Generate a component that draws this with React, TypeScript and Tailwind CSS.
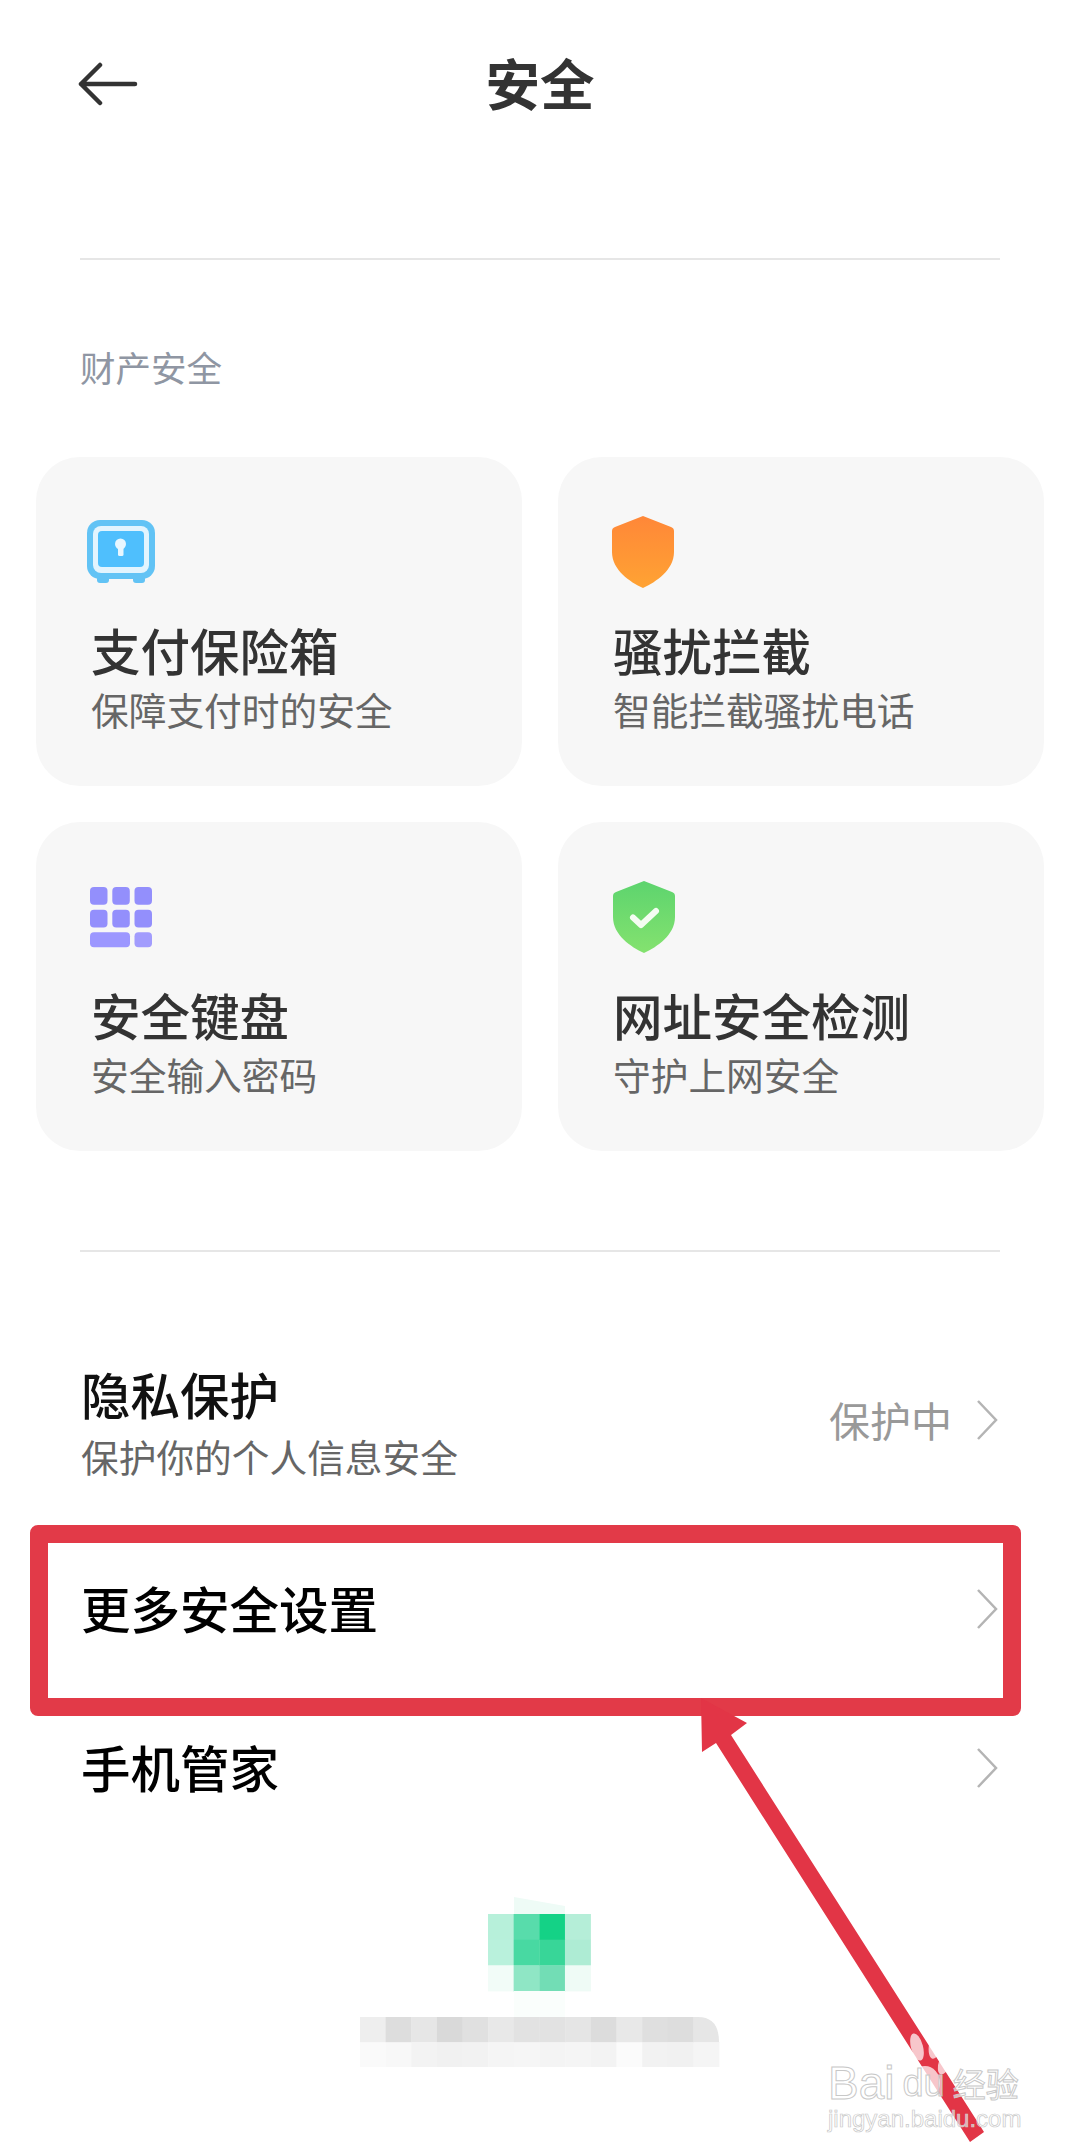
const sans = "font-['Noto_Sans_CJK_SC','Noto_Sans',sans-serif]";

function SafeIcon() {
  return (
    <svg width="68" height="63" viewBox="0 0 68 63">
      <rect x="10" y="56" width="12" height="7" rx="3" fill="#62c3f5" />
      <rect x="46" y="56" width="12" height="7" rx="3" fill="#62c3f5" />
      <rect x="0" y="0" width="68" height="59" rx="13" fill="#62c3f5" />
      <rect x="6" y="6" width="56" height="47" rx="8" fill="#e2f4fe" />
      <rect x="11" y="11" width="46" height="36" rx="4" fill="#4fbffd" />
      <circle cx="33.500" cy="24" r="5.500" fill="#e8f7ff" />
      <rect x="31" y="25" width="5.500" height="11" rx="1.500" fill="#e8f7ff" />
    </svg>
  );
}

const shield = "M31 0 L59 11 Q62 12 62 15 V36 C62 54 44 66 31 72 C18 66 0 54 0 36 V15 Q0 12 3 11 Z";

function OrangeShield() {
  return (
    <svg width="62" height="72" viewBox="0 0 62 72">
      <defs>
        <linearGradient id="o" x1="0" y1="0" x2="0" y2="1">
          <stop offset="0" stopColor="#ff8738" />
          <stop offset="1" stopColor="#ffa333" />
        </linearGradient>
      </defs>
      <path d={shield} fill="url(#o)" />
    </svg>
  );
}

function GreenShield() {
  return (
    <svg width="62" height="72" viewBox="0 0 62 72">
      <defs>
        <linearGradient id="g" x1="0" y1="0" x2="0" y2="1">
          <stop offset="0" stopColor="#5dd46e" />
          <stop offset="1" stopColor="#84e26f" />
        </linearGradient>
      </defs>
      <path d={shield} fill="url(#g)" />
      <path d="M20 36.500 L28 44 L43 30" fill="none" stroke="#f4fdf2" strokeWidth="6" strokeLinecap="round" strokeLinejoin="round" />
    </svg>
  );
}

function KeyboardIcon() {
  const cols = [0, 22.300, 44.500];
  const rows = [0, 22.700];
  return (
    <svg width="62" height="61" viewBox="0 0 62 61">
      {rows.map((y) =>
        cols.map((x) => <rect key={`${x}-${y}`} x={x} y={y} width="17.500" height="17.700" rx="4" fill="#938ffc" />),
      )}
      <rect x="0" y="45.300" width="40" height="15" rx="4" fill="#9c97ff" />
      <rect x="44.500" y="45.300" width="17.500" height="15" rx="4" fill="#a29cfd" />
    </svg>
  );
}

function Chevron() {
  return (
    <svg width="22" height="42" viewBox="0 0 22 42" className="shrink-0">
      <path d="M2 2 L20 21 L2 40" fill="none" stroke="#b4b4b4" strokeWidth="2.500" />
    </svg>
  );
}

function Card({ icon, title, sub, iconClass }: { icon: React.ReactNode; title: string; sub: string; iconClass: string }) {
  return (
    <div className="flex h-[329px] flex-col rounded-[44px] bg-[#f7f7f7] pl-[55px]">
      <div className={iconClass}>{icon}</div>
      <div className="mt-auto text-[49.500px] leading-[60px] font-medium text-[#333333]">{title}</div>
      <div className="mt-[6px] mb-[54px] text-[37.700px] leading-[46px] text-[#666666]">{sub}</div>
    </div>
  );
}

const mosaicTop = [
  ["#b7f0da", "#58dcab", "#14d286", "#b5eed8"],
  ["#b9f1dc", "#48d9a2", "#38d698", "#aeecd4"],
  ["#f2fcf8", "#8fe6c5", "#72ddb5", "#effbf6"],
];
const mosaicA = ["#eeeeee", "#dddddd", "#e6e6e6", "#d9d9d9", "#e0e0e0", "#e8e8e8", "#e2e2e2", "#e2e2e2", "#e5e5e5", "#dcdcdc", "#e8e8e8", "#dfdfdf", "#dddddd", "#e6e6e6"];
const mosaicB = ["#fafafa", "#f8f8f8", "#f3f3f3", "#f1f1f1", "#f2f2f2", "#f5f5f5", "#f6f6f6", "#f4f4f4", "#f5f5f5", "#f3f3f3", "#fbfbfb", "#f2f2f2", "#f1f1f1", "#f5f5f5"];

function Mosaic() {
  const w = 25.650;
  return (
    <svg width="360" height="170" viewBox="0 0 360 170" className="mx-auto block">
      {mosaicTop.map((row, r) =>
        row.map((c, i) => (
          <rect key={`${r}-${i}`} x={128 + i * w} y={17 + r * 25.700} width={w + 0.300} height="26" fill={c} />
        )),
      )}
      <path d="M154 0 L205 9 V17 H154 Z" fill="#eefbf6" />
      <rect x="154" y="94" width="51" height="26" fill="#fafefc" />
      {mosaicA.map((c, i) => (
        <rect key={i} x={i * w} y="120" width={w + 0.300} height="25.500" fill={c} />
      ))}
      {mosaicB.map((c, i) => (
        <rect key={i} x={i * w} y="145.500" width={w + 0.300} height="24.500" fill={c} />
      ))}
      <path d="M320 120 H360 V145 H359 Q359 120 338 120 Z" fill="#ffffff" />
    </svg>
  );
}

export default function App() {
  return (
    <div className={`relative h-[2154px] w-[1080px] overflow-hidden bg-white ${sans}`}>
      <header className="relative flex h-[168px] items-center justify-center">
        <svg width="60" height="44" viewBox="0 0 60 44" className="absolute top-[62px] left-[78px]">
          <path d="M22 3 L3 22 L22 41 M3 22 H57" fill="none" stroke="#333333" strokeWidth="4.500" strokeLinecap="round" strokeLinejoin="round" />
        </svg>
        <h1 className="mb-[5px] text-[54.500px] leading-[60px] font-semibold text-[#333333]">安全</h1>
      </header>

      <div className="mx-20 mt-[90px] h-[2px] bg-[#e6e6e6]" />

      <div className="mt-[87px] mb-[70px] px-20 text-[35.500px] leading-[40px] text-[#8f96a3]">财产安全</div>

      <div className="grid grid-cols-2 gap-9 px-9">
        <Card icon={<SafeIcon />} iconClass="mt-[63px] ml-[-4px]" title="支付保险箱" sub="保障支付时的安全" />
        <Card icon={<OrangeShield />} iconClass="mt-[59px] ml-[-1px]" title="骚扰拦截" sub="智能拦截骚扰电话" />
        <Card icon={<KeyboardIcon />} iconClass="mt-[65px] ml-[-1px]" title="安全键盘" sub="安全输入密码" />
        <Card icon={<GreenShield />} iconClass="mt-[59px]" title="网址安全检测" sub="守护上网安全" />
      </div>

      <div className="mx-20 mt-[99px] h-[2px] bg-[#e6e6e6]" />

      <div className="mt-[61px] flex h-[216px] items-center justify-between pr-[82px] pl-[81px]">
        <div>
          <div className="text-[49.500px] leading-[60px] font-medium text-[#111111]">隐私保护</div>
          <div className="mt-[9px] text-[37.700px] leading-[46px] text-[#666666]">保护你的个人信息安全</div>
        </div>
        <div className="mb-[2px] flex items-center gap-[24px]">
          <span className="mb-[2px] text-[41px] leading-[50px] text-[#999999]">保护中</span>
          <Chevron />
        </div>
      </div>

      <div className="relative flex h-[160px] items-center justify-between pr-[82px] pl-[81px]">
        <div className="mb-[3px] text-[49.500px] leading-[60px] font-medium text-[#000000]">更多安全设置</div>
        <Chevron />
        <div className="absolute top-[-4px] left-[30px] h-[191px] w-[991px] rounded-[8px] border-[18px] border-[#e23a48]" />
      </div>

      <div className="flex h-[158px] items-center justify-between pr-[82px] pl-[81px]">
        <div className="mb-[3px] text-[49.500px] leading-[60px] font-medium text-[#000000]">手机管家</div>
        <Chevron />
      </div>

      <div className="mt-[50px]">
        <Mosaic />
      </div>

      <svg width="1080" height="2154" viewBox="0 0 1080 2154" className="pointer-events-none absolute inset-0">
        <path d="M701 1698 L747 1723 L731 1735 L984 2132 L970 2142 L716 1743 L702 1752 Z" fill="#e23546" />
        <g fill="#ffffff" fillOpacity="0.72">
          <ellipse cx="917" cy="2047" rx="6" ry="14" transform="rotate(-15 917 2047)" />
          <ellipse cx="935" cy="2045" rx="6" ry="14" transform="rotate(10 935 2045)" />
          <ellipse cx="906" cy="2065" rx="6" ry="13" transform="rotate(-20 906 2065)" />
          <ellipse cx="945" cy="2062" rx="6" ry="13" transform="rotate(20 945 2062)" />
          <ellipse cx="925" cy="2083" rx="15" ry="17" />
        </g>
      </svg>

      <div className="absolute top-[2060px] left-[828px] flex items-center text-[46px] leading-[46px] font-normal text-white/60 [-webkit-text-stroke:1px_#c8c8c8]">
        <span className="font-['Liberation_Sans',sans-serif]">Bai</span>
        <span className="ml-[8px] font-['Liberation_Sans',sans-serif] text-[38px]">du</span>
        <span className="ml-[8px] text-[33px]">经验</span>
      </div>
      <div className="absolute top-[2104px] left-[828px] font-['Liberation_Sans',sans-serif] text-[24px] leading-[30px] text-white/60 [-webkit-text-stroke:0.7px_#c8c8c8]">
        jingyan.baidu.com
      </div>
    </div>
  );
}
